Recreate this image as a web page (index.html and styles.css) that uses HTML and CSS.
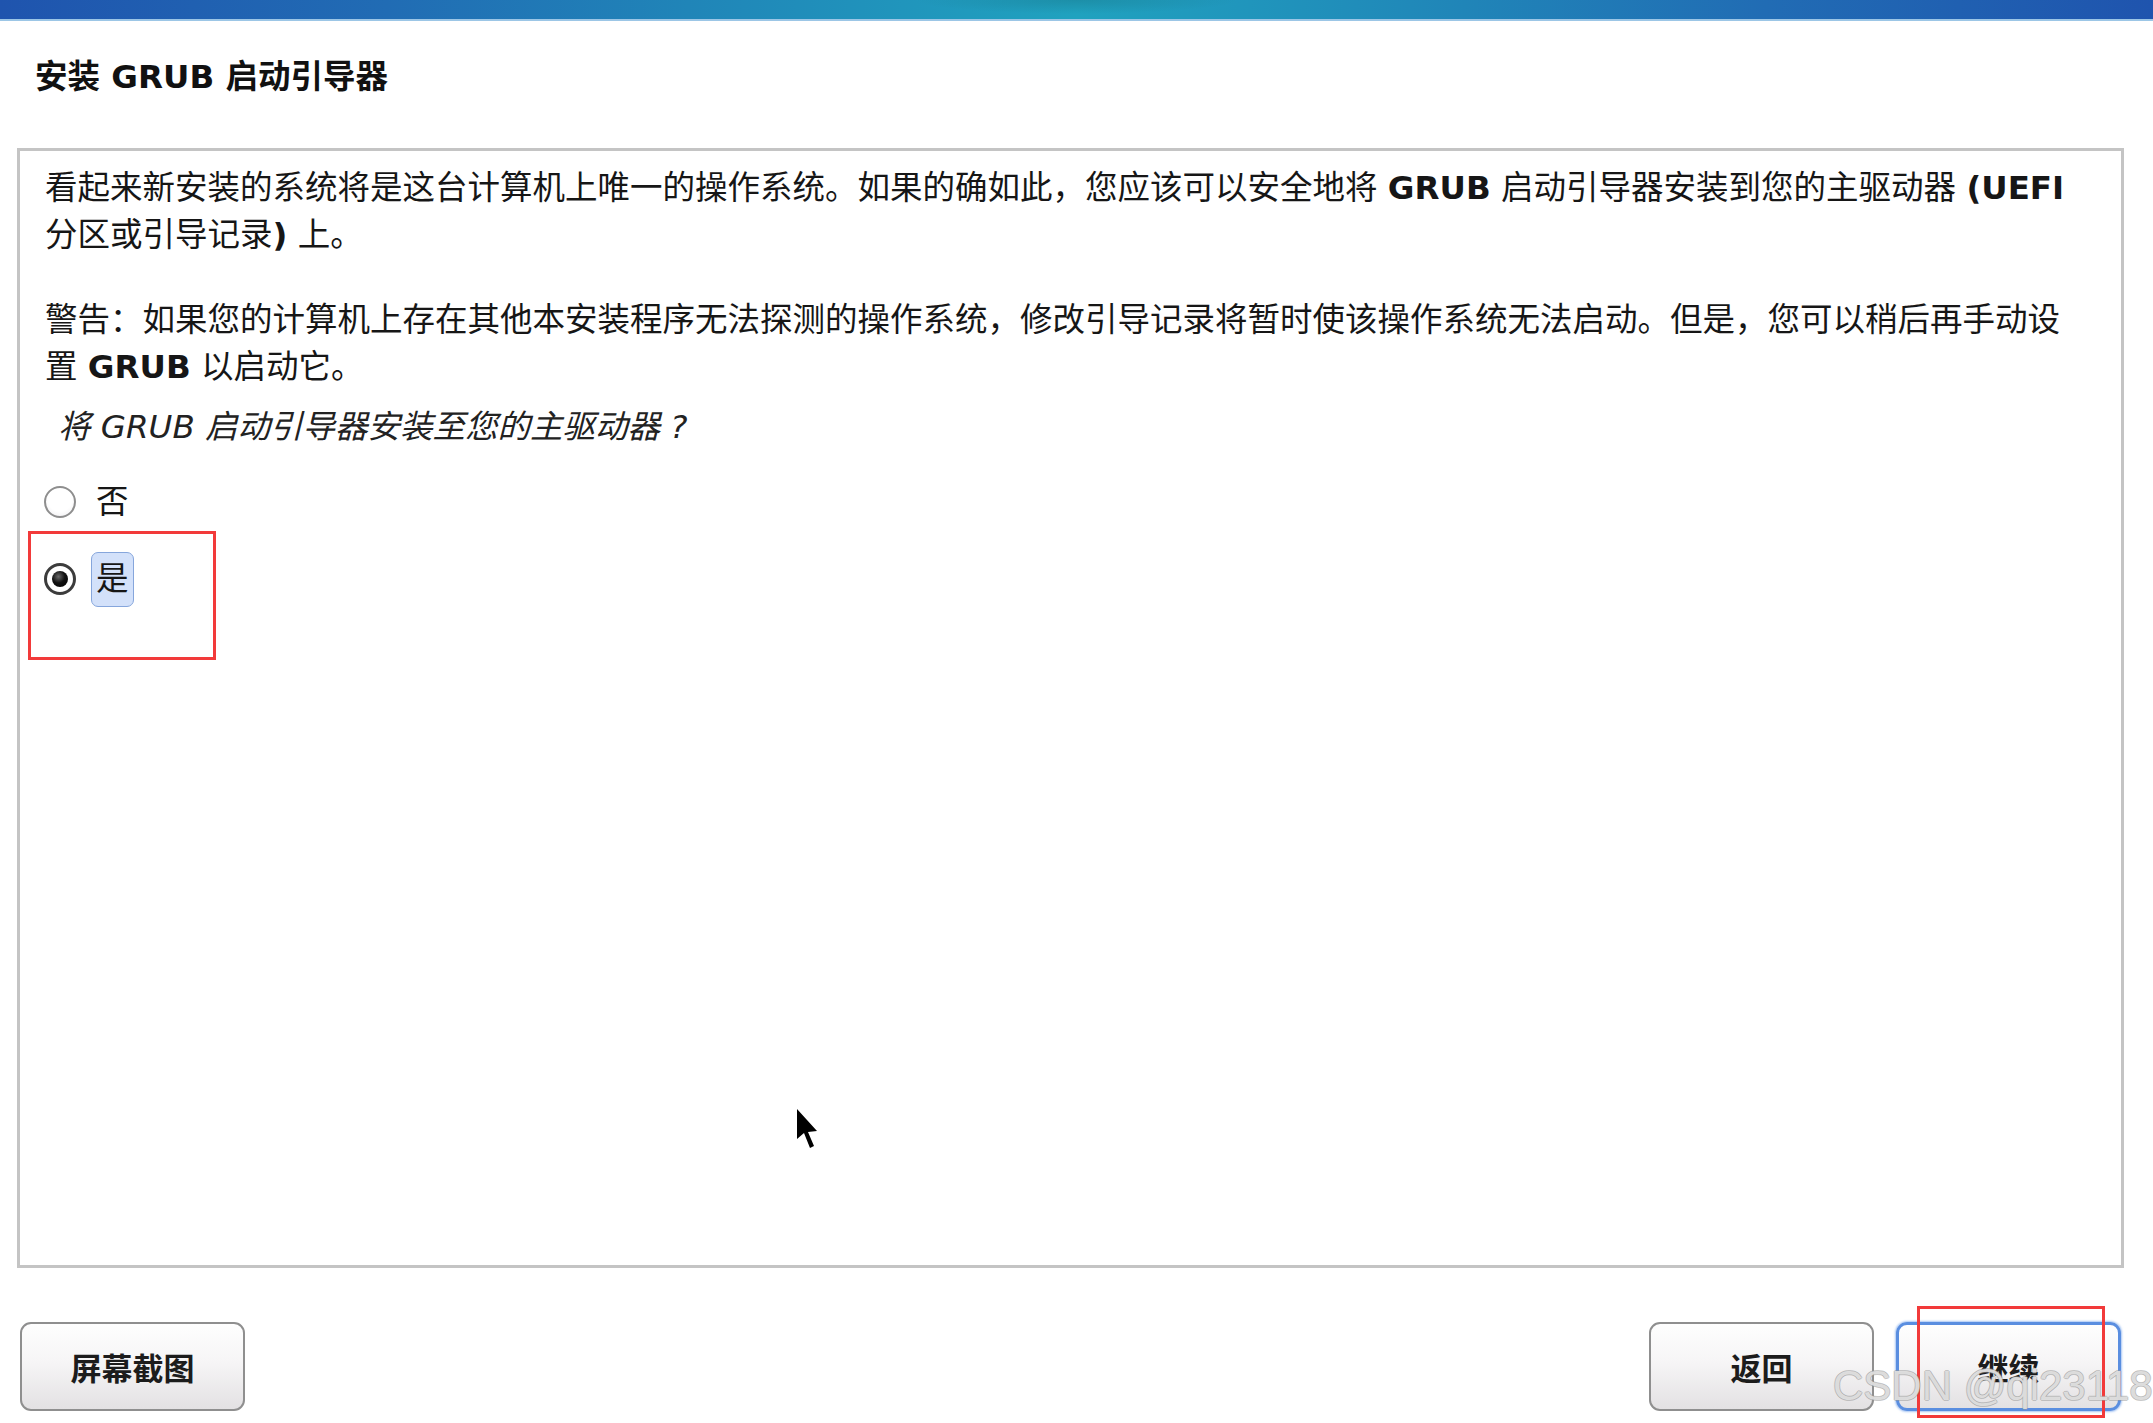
FILE: index.html
```html
<!DOCTYPE html>
<html lang="zh-CN">
<head>
<meta charset="utf-8">
<title>安装 GRUB 启动引导器</title>
<link rel="stylesheet" href="styles.css">
</head>
<body>
<div class="topbar"></div>
<h1 class="title">安装 <b class="lat">GRUB</b> 启动引导器</h1>
<main class="panel">
  <p class="para">看起来新安装的系统将是这台计算机上唯一的操作系统。如果的确如此，您应该可以安全地将 <b class="lat">GRUB</b> 启动引导器安装到您的主驱动器 <b class="lat">(UEFI</b><br>分区或引导记录<b class="lat">)</b> 上。</p>
  <p class="para warn">警告：如果您的计算机上存在其他本安装程序无法探测的操作系统，修改引导记录将暂时使该操作系统无法启动。但是，您可以稍后再手动设<br>置 <b class="lat">GRUB</b> 以启动它。</p>
  <p class="question">将 GRUB 启动引导器安装至您的主驱动器 ?</p>
  <div class="options">
    <div class="option"><span class="radio"></span><span class="label">否</span></div>
    <div class="option"><span class="radio on"></span><span class="label focus">是</span></div>
  </div>
</main>
<footer class="footer">
  <button class="btn">屏幕截图</button>
  <div class="nav">
    <button class="btn">返回</button>
    <button class="btn default">继续</button>
  </div>
</footer>

<div class="mark mark-yes"></div>
<div class="mark mark-continue"></div>
<svg class="cursor" width="22" height="40" viewBox="0 0 22 40"><path d="M1 0 L1 30 L8 24 L14 39 L18 37 L12 23 L21 22 Z" fill="#000"/></svg>
<div class="watermark">CSDN @qi23118</div>
</body>
</html>
```

FILE: styles.css
```css
html, body {
  margin: 0;
  padding: 0;
  background: #ffffff;
}
body {
  font-family: "DejaVu Sans", "Noto Sans CJK SC", sans-serif;
  color: #161616;
  position: relative;
  width: 2153px;
  height: 1423px;
  overflow: hidden;
}
.topbar {
  height: 19px;
  border-bottom: 2px solid #9cc6e6;
  background:
    radial-gradient(ellipse 160px 14px at 50% 0, rgba(24, 120, 140, 0.45), rgba(24, 120, 140, 0)),
    linear-gradient(to right, #1f54ae 0%, #216cb4 18%, #2085b8 32%, #20a2bf 50%, #2085b8 68%, #216cb4 82%, #1f54ae 100%);
}
.title {
  margin: 36px 0 0 0;
  padding-left: 35px;
  font-size: 32.5px;
  line-height: 40px;
  height: 40px;
  font-weight: 700;
  color: #111;
}
.lat {
  font-family: "DejaVu Sans", sans-serif;
  font-weight: 700;
}
.panel {
  display: block;
  margin: 51px 0 0 17px;
  width: 2107px;
  height: 1120px;
  box-sizing: border-box;
  border: 3px solid #c4c4c4;
  padding: 14px 25px 0 25px;
}
.para {
  margin: 0;
  font-size: 32.5px;
  line-height: 47px;
  white-space: nowrap;
}
.warn {
  margin-top: 37.5px;
}
.question {
  margin: 13px 0 0 0;
  padding-left: 13px;
  font-size: 32.5px;
  line-height: 47px;
  font-style: italic;
  color: #222;
}
.options {
  margin-top: 13px;
  display: flex;
  flex-direction: column;
}
.option {
  height: 77px;
  display: flex;
  align-items: center;
}
.radio {
  position: relative;
  width: 32px;
  height: 32px;
  margin-left: -1px;
  box-sizing: border-box;
  border-radius: 50%;
  border: 2px solid #8e8e8e;
  background: radial-gradient(circle at 50% 40%, #ffffff 55%, #ecebee 100%);
}
.radio.on {
  border: 3px solid #3c3c3c;
  background: #fff;
}
.radio.on::after {
  content: "";
  position: absolute;
  left: 50%;
  top: 50%;
  width: 16px;
  height: 16px;
  margin: -8px 0 0 -8px;
  border-radius: 50%;
  background: radial-gradient(circle at 40% 35%, #6a6a6a 0%, #111 45%, #000 100%);
}
.label {
  margin-left: 15px;
  padding: 4px 4px;
  font-size: 32.5px;
  line-height: 45px;
  border: 1px solid transparent;
  border-radius: 7px;
}
.label.focus {
  background: #d3e1fa;
  border-color: #86a6dc;
}
.footer {
  margin-top: 54px;
  padding: 0 32px 0 20px;
  display: flex;
  justify-content: space-between;
}
.nav {
  display: flex;
  gap: 22px;
}
.btn {
  width: 225px;
  height: 89px;
  box-sizing: border-box;
  border: 2px solid #8f8f8f;
  border-radius: 11px;
  background: linear-gradient(to bottom, #fefefe 0%, #f6f5f6 45%, #e3e1e3 100%);
  font-family: "Noto Sans CJK SC", sans-serif;
  font-size: 31px;
  font-weight: 700;
  color: #1c1c1c;
  padding: 0;
}
.btn.default {
  border: 3px solid #5a8ee0;
  box-shadow: 0 0 2px 1px rgba(110, 160, 235, 0.6);
}
.mark {
  position: absolute;
  border: 3px solid #f23a3a;
  box-sizing: border-box;
}
.mark-yes {
  left: 28px;
  top: 531px;
  width: 188px;
  height: 129px;
}
.mark-continue {
  left: 1917px;
  top: 1306px;
  width: 188px;
  height: 112px;
}
.cursor {
  position: absolute;
  left: 796px;
  top: 1109px;
}
.watermark {
  position: absolute;
  left: 1833px;
  top: 1362px;
  font-family: "Liberation Sans", Arial, sans-serif;
  font-size: 42px;
  line-height: 48px;
  white-space: nowrap;
  color: rgba(238, 238, 238, 0.8);
  text-shadow:
    1px 0 0 rgba(150, 150, 150, 0.5),
    -1px 0 0 rgba(150, 150, 150, 0.5),
    0 1px 0 rgba(150, 150, 150, 0.5),
    0 -1px 0 rgba(150, 150, 150, 0.5);
}
```
